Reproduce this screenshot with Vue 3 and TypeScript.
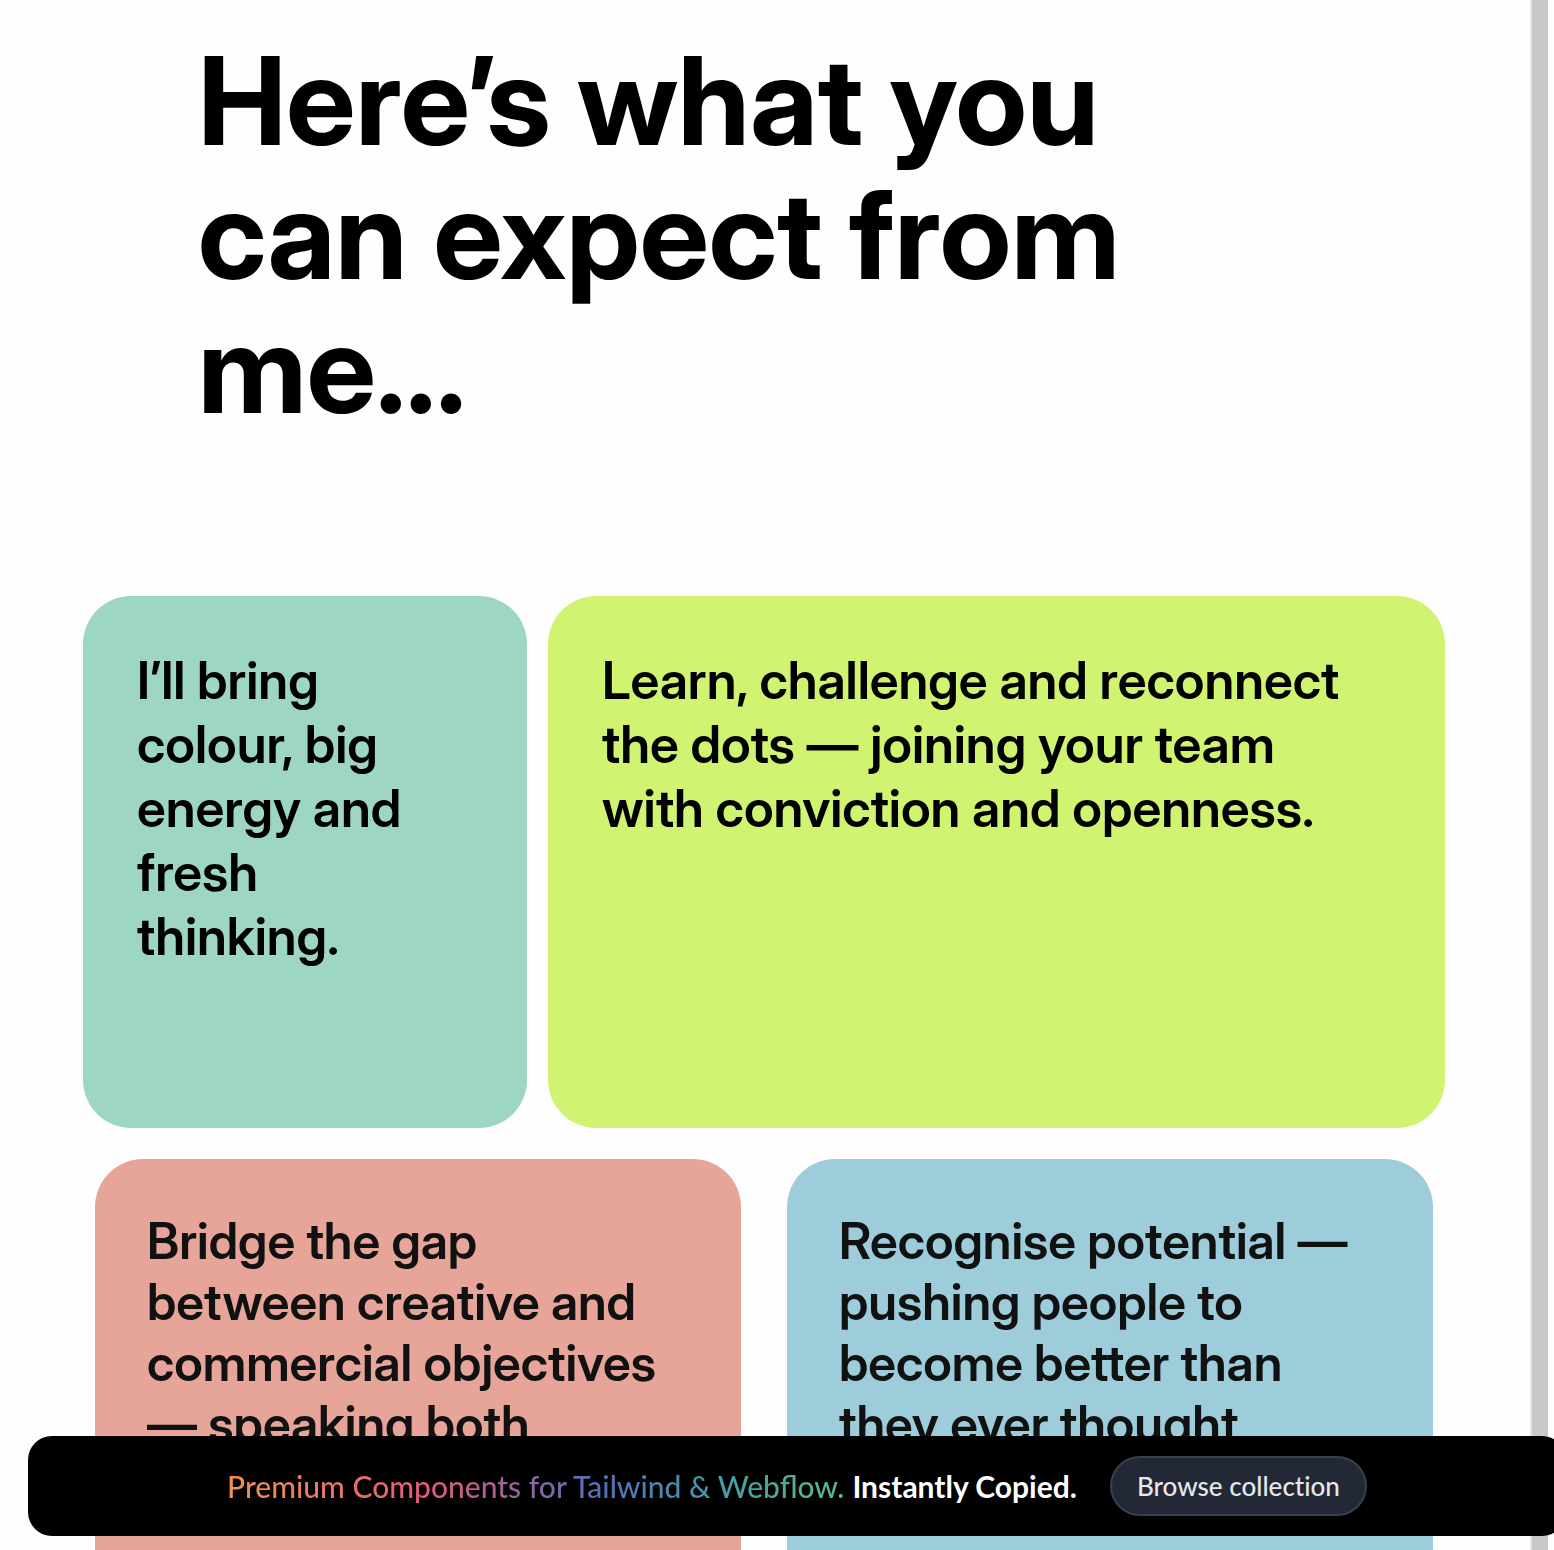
<script setup lang="ts">
interface Card {
  text: string
  tone: string
}

const topCards: Card[] = [
  { text: 'I’ll bring colour, big energy and fresh thinking.', tone: 'mint' },
  {
    text: 'Learn, challenge and reconnect the dots — joining your team with conviction and openness.',
    tone: 'lime',
  },
]

const lowerCards: Card[] = [
  { text: 'Bridge the gap between creative and commercial objectives — speaking both', tone: 'coral' },
  { text: 'Recognise potential — pushing people to become better than they ever thought', tone: 'sky' },
]
</script>

<template>
  <div class="page">
    <main class="content">
      <h1 class="title">Here’s what you can expect from me...</h1>
      <section class="row row-top">
        <article v-for="card in topCards" :key="card.tone" class="card" :class="card.tone">
          <p>{{ card.text }}</p>
        </article>
      </section>
      <section class="row row-lower">
        <article v-for="card in lowerCards" :key="card.tone" class="card" :class="card.tone">
          <p>{{ card.text }}</p>
        </article>
      </section>
    </main>
    <div class="rail"></div>
    <aside class="banner">
      <p class="pitch">
        <span class="rainbow">Premium Components for Tailwind &amp; Webflow.</span>
        <strong>Instantly Copied.</strong>
      </p>
      <button type="button" class="browse">Browse collection</button>
    </aside>
  </div>
</template>

<style>
body {
  margin: 0;
  background: #fefefe;
}
</style>

<style scoped>
.page {
  display: flex;
  height: 100vh;
  padding-right: 6px;
  box-sizing: border-box;
  overflow: hidden;
  font-family: "Inter Display", Inter, "Liberation Sans", sans-serif;
  color: #000;
}

.content {
  flex: 1;
  min-width: 0;
  display: flex;
  flex-direction: column;
  padding: 34px 85px 0 83px;
}

.title {
  margin: 0 200px 0 115px;
  max-width: 960px;
  font-size: 123px;
  line-height: 134px;
  font-weight: 700;
}

.row {
  display: grid;
}

.row-top {
  grid-template-columns: 444fr 897fr;
  gap: 21px;
  margin-top: 160px;
}

.row-lower {
  flex: 1;
  grid-template-columns: 1fr 1fr;
  gap: 46px;
  margin: 31px 12px 0;
}

.card {
  box-sizing: border-box;
  min-width: 0;
  padding: 52px 60px 0 52px;
  border-radius: 48px;
  font-weight: 600;
}

.card p {
  margin: 0;
}

.row-top .card {
  min-height: 532px;
  padding: 53px 60px 0 54px;
  font-size: 52px;
  line-height: 64px;
}

.row-lower .card {
  border-radius: 48px 48px 0 0;
  font-size: 50px;
  line-height: 61px;
  font-feature-settings: "calt" 0, "liga" 0;
  color: #111;
}

.mint {
  background: #9dd7c1;
}

.lime {
  background: #d0f372;
}

.coral {
  background: #e7a599;
}

.sky {
  background: #9dccda;
}

.rail {
  width: 16px;
  border-left: 2px solid #e2e6ea;
  background: #c6c9c7;
}

.banner {
  position: fixed;
  left: 28px;
  right: -12px;
  bottom: 14px;
  display: flex;
  align-items: center;
  justify-content: center;
  gap: 33px;
  height: 100px;
  border-radius: 24px;
  background: #000;
  color: #fff;
  font-family: Lato, "Open Sans", sans-serif;
}

.pitch {
  display: flex;
  gap: 8px;
  margin: 0;
  font-size: 30px;
  line-height: 40px;
  font-weight: 500;
  white-space: nowrap;
}

.pitch strong {
  font-weight: 700;
}

.rainbow {
  background: linear-gradient(90deg, #f0954a, #e2597c 33%, #5170b8 60%, #459ba6 80%, #5cbb8a);
  -webkit-background-clip: text;
  background-clip: text;
  color: transparent;
}

.browse {
  height: 60px;
  padding: 0 25px;
  border: 2px solid #374151;
  border-radius: 30px;
  background: #222836;
  color: #e5e7eb;
  font: 500 26px/36px Lato, "Open Sans", sans-serif;
  font-variant-ligatures: none;
  white-space: nowrap;
}
</style>
